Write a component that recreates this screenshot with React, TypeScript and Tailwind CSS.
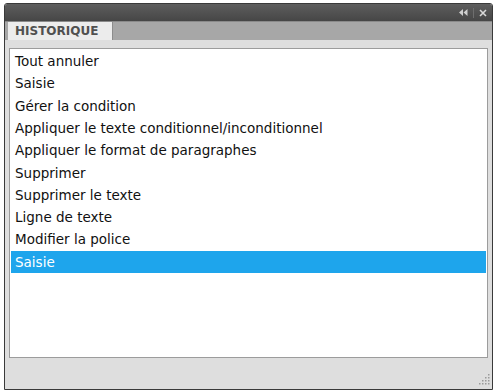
import React from 'react'

const items = [
  'Tout annuler',
  'Saisie',
  'Gérer la condition',
  'Appliquer le texte conditionnel/inconditionnel',
  'Appliquer le format de paragraphes',
  'Supprimer',
  'Supprimer le texte',
  'Ligne de texte',
  'Modifier la police',
  'Saisie',
]

const selected = 9

export default function App() {
  return (
    <div
      className="w-[495px] h-[392px] bg-white pl-[4px] pt-[3px]"
      style={{ fontFamily: '"DejaVu Sans", Verdana, sans-serif' }}
    >
      <div className="w-[489px] h-[387px] border border-[#3a3a3a] rounded-t-[3px] flex flex-col overflow-hidden">
        {/* barre de titre */}
        <div className="h-[17px] bg-gradient-to-b from-[#5e5e5e] to-[#464646] flex items-center justify-end pr-[5px] gap-[5px]">
          <svg width="9" height="7" viewBox="0 0 9 7">
            <path d="M4 0 L0 3.5 L4 7 Z M8.5 0 L4.5 3.5 L8.5 7 Z" fill="#d0d0d0" />
          </svg>
          <div className="w-px h-[10px] bg-[#6e6e6e]" />
          <svg width="8" height="8" viewBox="0 0 8 8">
            <path d="M1 1 L7 7 M7 1 L1 7" stroke="#d8d8d8" strokeWidth="1.6" />
          </svg>
        </div>

        {/* onglets */}
        <div className="h-[19px] bg-[#a7a7a7] border-t border-[#8a8a8a] flex items-end">
          <div className="ml-[3px] w-[105px] h-[18px] bg-[#ececec] border-r border-[#8c8c8c] flex items-center pl-[7px] text-[12px] font-bold text-[#505050]">
            HISTORIQUE
          </div>
        </div>

        {/* corps */}
        <div className="flex-1 bg-[#dedede] pl-[4px] pr-[4px] pt-[8px] pb-[31px] flex flex-col relative">
          <div className="flex-1 bg-white border border-[#9c9c9c] pt-[1px] px-[1px]">
            {items.map((t, i) => (
              <div
                key={i}
                className={`h-[22.3px] flex items-center pl-[4px] text-[13.5px] ${
                  i === selected ? 'bg-[#1ea5ec] text-white' : 'text-[#111]'
                }`}
              >
                {t}
              </div>
            ))}
          </div>
          <svg className="absolute right-[2px] bottom-[3px]" width="13" height="13" viewBox="0 0 13 13">
            {[
              [11, 1], [11, 4], [8, 4], [11, 7], [8, 7], [5, 7], [11, 10], [8, 10], [5, 10], [2, 10],
            ].map(([x, y], k) => (
              <rect key={k} x={x} y={y} width="1.5" height="1.5" fill="#9a9a9a" />
            ))}
          </svg>
        </div>
      </div>
    </div>
  )
}
